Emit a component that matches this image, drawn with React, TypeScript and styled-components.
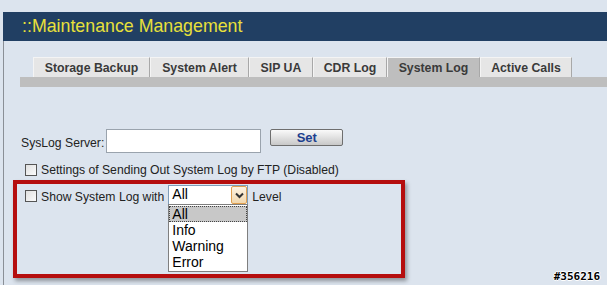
import React from "react";
import styled, { createGlobalStyle } from "styled-components";

const GlobalStyle = createGlobalStyle`
  html, body {
    margin: 0;
    padding: 0;
    background: #dce4ee;
    font-family: "Liberation Sans", Arial, sans-serif;
  }
`;

const Page = styled.div`
  position: relative;
  width: 607px;
  height: 285px;
  overflow: hidden;
  padding-top: 12px;
  box-sizing: border-box;
`;

const Header = styled.div`
  margin-left: 3px;
  height: 29px;
  background: #213f63;
  display: flex;
  align-items: center;
  padding-left: 19px;
  color: #e8e03a;
  font-size: 17.8px;
`;

const Panel = styled.div`
  margin-left: 3px;
  border-left: 1px solid #8a8f96;
  height: 260px;
  padding-top: 16px;
  box-sizing: border-box;
`;

const TabStrip = styled.div`
  margin-left: 16px;
`;

const TabRow = styled.div`
  display: flex;
  padding-left: 13px;
  height: 20px;
`;

const Tab = styled.div<{ $active?: boolean; $w: number }>`
  width: ${({ $w }) => $w}px;
  box-sizing: border-box;
  display: flex;
  align-items: center;
  justify-content: center;
  font-size: 12.3px;
  font-weight: bold;
  color: #3a3a3a;
  background: ${({ $active }) => ($active ? "#bebebe" : "#e6e6e6")};
  border-top: 1px solid #f4f4f4;
  border-left: 1px solid #f4f4f4;
  border-right: 1px solid #a8a8a8;
`;

const TabBar = styled.div`
  height: 10px;
  background: #bebebe;
`;

const Body = styled.div`
  padding-left: 17px;
  padding-top: 42px;
  font-size: 12.2px;
  color: #222;
`;

const ServerRow = styled.div`
  display: flex;
  align-items: flex-start;
  height: 24px;
`;

const Label = styled.span`
  padding-top: 7px;
  margin-right: 2px;
`;

const TextInput = styled.div`
  width: 155px;
  height: 24px;
  box-sizing: border-box;
  background: #fff;
  border: 1px solid #9aa3ad;
`;

const SetButton = styled.div`
  margin-left: 9px;
  width: 73px;
  height: 17px;
  box-sizing: border-box;
  border: 1px solid #6e6e6e;
  border-radius: 2px;
  background: linear-gradient(#fafafa, #dcdcdc 60%, #c8c8c8);
  color: #1d3f8f;
  font-weight: bold;
  font-size: 13px;
  display: flex;
  align-items: center;
  justify-content: center;
`;

const CheckRow = styled.div`
  display: flex;
  align-items: center;
  gap: 4px;
  margin-top: 10px;
  padding-left: 4px;
  height: 14px;
`;

const Box = styled.span`
  width: 12px;
  height: 12px;
  box-sizing: border-box;
  border: 1px solid #555;
  background: linear-gradient(135deg, #e0e0e0, #fbfbfb);
`;

const Annotation = styled.div`
  margin-left: -8px;
  margin-top: 3px;
  width: 392px;
  height: 98px;
  box-sizing: border-box;
  border: 4px solid #b50e0e;
  box-shadow: 2px 3px 4px rgba(0, 0, 0, 0.35);
  padding: 3px 0 0 8px;
`;

const LevelRow = styled.div`
  display: flex;
  align-items: flex-start;
  gap: 4px;
`;

const LevelText = styled.span`
  padding-top: 3px;
`;

const SelectWrap = styled.div`
  position: relative;
  width: 80px;
  height: 20px;
  margin: -2px 0 0 0;
`;

const SelectBox = styled.div`
  width: 80px;
  height: 20px;
  box-sizing: border-box;
  background: #fff;
  border: 1px solid #7f9db9;
  display: flex;
  align-items: center;
  font-size: 14px;
  padding-left: 3px;
  color: #000;
`;

const SelectValue = styled.span`
  flex: 1;
  margin-top: -2px;
`;

const ArrowBtn = styled.div`
  width: 16px;
  height: 18px;
  box-sizing: border-box;
  border: 1px solid #e0a050;
  border-radius: 2px;
  background: linear-gradient(#fdf3e2, #f2d8ae);
  display: flex;
  align-items: center;
  justify-content: center;
`;

const ListBox = styled.div`
  position: absolute;
  left: 0;
  top: 19px;
  width: 80px;
  box-sizing: border-box;
  background: #fff;
  border: 1px solid #7f7f7f;
  font-size: 14px;
  color: #000;
  padding: 1px 0;
`;

const Option = styled.div<{ $selected?: boolean }>`
  height: 16px;
  line-height: 14px;
  padding-left: 2px;
  box-sizing: border-box;
  background: ${({ $selected }) => ($selected ? "#c8c8c8" : "transparent")};
  border: 1px ${({ $selected }) => ($selected ? "dotted #444" : "solid transparent")};
`;

const Watermark = styled.div`
  position: absolute;
  right: 7px;
  bottom: 2px;
  font-family: "DejaVu Sans Mono", monospace;
  font-size: 11px;
  font-weight: bold;
  color: #000;
  text-shadow: 1px 0 #fff, -1px 0 #fff, 0 1px #fff, 0 -1px #fff;
`;

const tabs = [
  { label: "Storage Backup", w: 117 },
  { label: "System Alert", w: 99 },
  { label: "SIP UA", w: 64 },
  { label: "CDR Log", w: 74 },
  { label: "System Log", w: 93, active: true },
  { label: "Active Calls", w: 92 },
];

const levels = ["All", "Info", "Warning", "Error"];

const App = () => (
  <Page>
    <GlobalStyle />
    <Header>::Maintenance Management</Header>
    <Panel>
      <TabStrip>
        <TabRow>
          {tabs.map((t) => (
            <Tab key={t.label} $w={t.w} $active={t.active}>
              {t.label}
            </Tab>
          ))}
        </TabRow>
        <TabBar />
      </TabStrip>
      <Body>
        <ServerRow>
          <Label>SysLog Server:</Label>
          <TextInput />
          <SetButton>Set</SetButton>
        </ServerRow>
        <CheckRow>
          <Box />
          <span>Settings of Sending Out System Log by FTP (Disabled)</span>
        </CheckRow>
        <Annotation>
          <LevelRow>
            <Box style={{ marginTop: 3 }} />
            <LevelText>Show System Log with</LevelText>
            <SelectWrap>
              <SelectBox>
                <SelectValue>All</SelectValue>
                <ArrowBtn>
                  <svg width="9" height="7" viewBox="0 0 9 7">
                    <path d="M1 1.5 L4.5 5 L8 1.5" fill="none" stroke="#333" strokeWidth="2" />
                  </svg>
                </ArrowBtn>
              </SelectBox>
              <ListBox>
                {levels.map((l, i) => (
                  <Option key={l} $selected={i === 0}>
                    {l}
                  </Option>
                ))}
              </ListBox>
            </SelectWrap>
            <LevelText>Level</LevelText>
          </LevelRow>
        </Annotation>
      </Body>
    </Panel>
    <Watermark>#356216</Watermark>
  </Page>
);

export default App;
